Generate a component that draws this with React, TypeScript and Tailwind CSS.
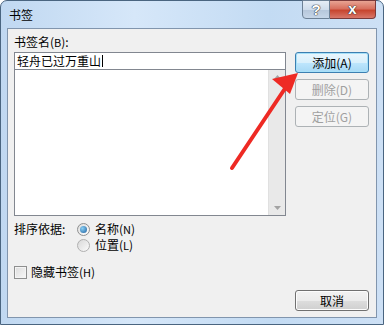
import React from "react";

const font = { fontFamily: '"Noto Sans CJK SC", "Liberation Sans", sans-serif' };

function Btn({ children, kind = "normal" }: { children: React.ReactNode; kind?: "normal" | "default" | "disabled" }) {
  const cls =
    kind === "disabled"
      ? "border-[#adb2b5] bg-[#f4f4f4] text-[#a0a0a0]"
      : kind === "default"
      ? "border-[#3c7fb1] bg-[linear-gradient(#eaf6fd_0%,#d9f0fc_50%,#bee6fd_51%,#a7d9f5_100%)] text-black shadow-[inset_0_0_0_1px_#a6e0f8]"
      : "border-[#707070] bg-[linear-gradient(#f2f2f2_0%,#ebebeb_50%,#dddddd_51%,#cfcfcf_100%)] text-black shadow-[inset_0_0_0_1px_#fcfcfc]";
  return (
    <div className={`w-[74px] h-[21px] rounded-[3px] border flex items-center justify-center text-[12px] leading-none ${cls}`}>
      {children}
    </div>
  );
}

export default function App() {
  return (
    <div className="relative w-[384px] h-[325px] overflow-hidden bg-white" style={font}>
      <div className="w-[384px] h-[325px] rounded-t-[7px] border border-[#4a6580] bg-[linear-gradient(90deg,#c0d8f1_0%,#d6e7f9_35%,#c3dbf3_70%,#cde0f5_100%)] flex flex-col">
        {/* title bar */}
        <div className="h-[27px] flex items-start justify-between">
          <div className="pl-[8px] pt-[7px] text-[12px] leading-[14px] text-black">书签</div>
          <div className="flex mr-[7px] -mt-px">
            <div className="w-[28px] h-[19px] rounded-bl-[4px] border border-[#6d8196] bg-[linear-gradient(#e5edf6_0%,#cfdceb_50%,#b5c6da_51%,#c6d6e8_100%)] flex items-center justify-center">
              <span className="text-white font-bold text-[15px] leading-none [text-shadow:0_0_1px_#333,0_0_1px_#333,0_0_1px_#333]" style={{ fontFamily: '"Liberation Sans", sans-serif' }}>?</span>
            </div>
            <div className="w-[46px] h-[19px] rounded-br-[4px] border border-l-0 border-[#7a3a3a] bg-[linear-gradient(#e8a493_0%,#d7705e_45%,#c7452f_55%,#d8776a_100%)] flex items-center justify-center">
              <span className="text-white font-bold text-[15px] leading-none -mt-[2px] [text-shadow:0_0_1px_#333,0_0_1px_#333,0_0_1px_#333]" style={{ fontFamily: '"Liberation Sans", sans-serif' }}>x</span>
            </div>
          </div>
        </div>
        {/* client */}
        <div className="mx-[6px] h-[290px] border border-[#8195ad] bg-[#f0f0f0] flex pl-[6px] pt-[6px]">
          <div className="w-[272px] flex flex-col">
            <div className="text-[12px] leading-[14px] text-black">书签名(<span className="text-[11px]">B</span>):</div>
            <div className="mt-[3px] h-[18px] border border-[#828790] bg-white flex items-center pl-[2px] text-[12px] leading-none text-black">
              轻舟已过万重山<span className="w-px h-[12px] bg-black ml-px" />
            </div>
            <div className="-mt-px h-[147px] border border-[#828790] bg-white flex justify-end">
              <div className="w-[17px] h-full bg-[#e9e9e9] border-l border-[#e0e0e0] flex flex-col items-center justify-between py-[5px]">
                <svg width="7" height="4" viewBox="0 0 7 4"><path d="M0 4 L3.5 0 L7 4Z" fill="#a3a3a3" /></svg>
                <svg width="7" height="4" viewBox="0 0 7 4"><path d="M0 0 L3.5 4 L7 0Z" fill="#a3a3a3" /></svg>
              </div>
            </div>
            <div className="mt-[5px] flex text-[12px] leading-[14px] text-black">
              <div className="w-[63px] pt-[1px]">排序依据:</div>
              <div className="flex flex-col">
                <div className="flex items-center gap-[5px] h-[16px]">
                  <div className="w-[13px] h-[13px] rounded-full border border-[#8e8f8f] bg-[linear-gradient(135deg,#dcdcdc,#ffffff)] flex items-center justify-center">
                    <div className="w-[7px] h-[7px] rounded-full bg-[radial-gradient(circle_at_35%_35%,#8ad0f5,#1e5f9e)]" />
                  </div>
                  <span>名称(<span className="text-[11px]">N</span>)</span>
                </div>
                <div className="flex items-center gap-[5px] h-[16px]">
                  <div className="w-[13px] h-[13px] rounded-full border border-[#b0b0b0] bg-[linear-gradient(135deg,#d8d8d8,#fbfbfb)]" />
                  <span>位置(<span className="text-[11px]">L</span>)</span>
                </div>
              </div>
            </div>
            <div className="mt-[12px] flex items-center gap-[4px] h-[14px] text-[12px] leading-[14px] text-black">
              <div className="w-[13px] h-[13px] border border-[#8e8f8f] bg-[linear-gradient(135deg,#dcdcdc,#f8f8f8)] shadow-[inset_0_0_0_1px_#f4f4f4]" />
              <span>隐藏书签(<span className="text-[11px]">H</span>)</span>
            </div>
          </div>
          <div className="ml-[9px] pt-[17px] flex flex-col justify-between pb-[6px] h-full">
            <div className="flex flex-col gap-[6px]">
              <Btn kind="default">添加(A)</Btn>
              <Btn kind="disabled">删除(D)</Btn>
              <Btn kind="disabled">定位(G)</Btn>
            </div>
            <Btn>取消</Btn>
          </div>
        </div>
      </div>
      {/* red annotation arrow */}
      <svg className="absolute left-0 top-0 pointer-events-none" width="384" height="325" viewBox="0 0 384 325">
        <line x1="232" y1="168" x2="288" y2="84" stroke="#ee2a24" strokeWidth="4" strokeLinecap="round" />
        <path d="M298 73 L272 79 L290 94 Z" fill="#ee2a24" />
      </svg>
    </div>
  );
}
